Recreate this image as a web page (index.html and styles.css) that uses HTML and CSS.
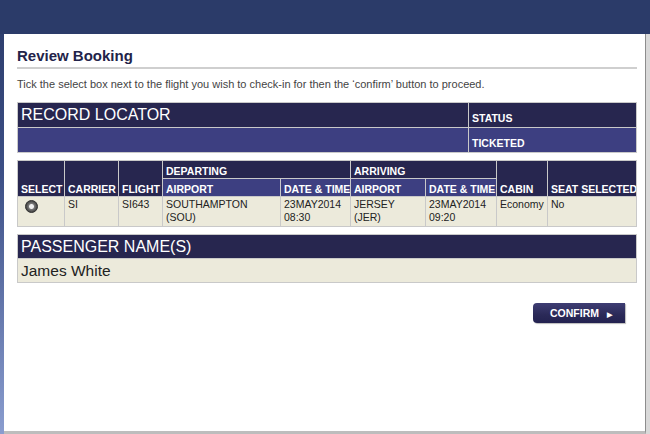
FILE: index.html
```html
<!DOCTYPE html>
<html lang="en">
<head>
    <meta charset="UTF-8">
    <title>Review Booking</title>
    <link rel="stylesheet" href="styles.css">
</head>
<body>
    <div class="topbar"></div>
    <div class="page">
        <div class="panel">
            <h1 class="title">Review Booking</h1>
            <p class="intro">Tick the select box next to the flight you wish to check-in for then the &lsquo;confirm&rsquo; button to proceed.</p>

            <table class="grid locator">
                <colgroup>
                    <col>
                    <col class="w-status">
                </colgroup>
                <tr class="dark">
                    <td class="big">RECORD LOCATOR</td>
                    <td class="status">STATUS</td>
                </tr>
                <tr class="blue">
                    <td></td>
                    <td class="status">TICKETED</td>
                </tr>
            </table>

            <table class="grid flights">
                <colgroup>
                    <col class="w-select">
                    <col class="w-carrier">
                    <col class="w-flight">
                    <col class="w-dep">
                    <col class="w-dtime">
                    <col class="w-arr">
                    <col class="w-atime">
                    <col class="w-cabin">
                    <col>
                </colgroup>
                <tr class="dark head">
                    <th rowspan="2">SELECT</th>
                    <th rowspan="2">CARRIER</th>
                    <th rowspan="2">FLIGHT</th>
                    <th colspan="2">DEPARTING</th>
                    <th colspan="2">ARRIVING</th>
                    <th rowspan="2">CABIN</th>
                    <th rowspan="2">SEAT SELECTED</th>
                </tr>
                <tr class="blue head">
                    <th>AIRPORT</th>
                    <th>DATE &amp; TIME</th>
                    <th>AIRPORT</th>
                    <th>DATE &amp; TIME</th>
                </tr>
                <tr class="row">
                    <td class="radio-cell"><span class="radio"></span></td>
                    <td>SI</td>
                    <td>SI643</td>
                    <td>SOUTHAMPTON<br>(SOU)</td>
                    <td>23MAY2014<br>08:30</td>
                    <td>JERSEY<br>(JER)</td>
                    <td>23MAY2014<br>09:20</td>
                    <td>Economy</td>
                    <td>No</td>
                </tr>
            </table>

            <table class="grid passengers">
                <tr class="dark">
                    <td class="big">PASSENGER NAME(S)</td>
                </tr>
                <tr class="row">
                    <td class="name">James White</td>
                </tr>
            </table>

            <div class="actions">
                <button class="btn">CONFIRM <span class="arrow">&#9654;</span></button>
            </div>
        </div>
    </div>
</body>
</html>
```

FILE: styles.css
```css
body{
    margin: 0;
    padding: 0;
    height: 434px;
    overflow: hidden;
    background: linear-gradient(to bottom, #2b3b69 0%, #3c4f86 40%, #8a9dcf 100%);
    font-family: "Liberation Sans", Arial, sans-serif;
}
.topbar{
    height: 34px;
    background: #2b3b69;
}
.page{
    height: 400px;
    padding-left: 4px;
}
.panel{
    box-sizing: border-box;
    height: 400px;
    background: #fff;
    border-right: 1px solid #8d8d8d;
    border-bottom: 3px solid #bdbdbd;
    box-shadow: 4px 0 0 #d9d9d9;
    margin-right: 4px;
    padding: 13px 8px 0 13px;
}
.title{
    margin: 0;
    padding: 0 0 2px;
    font-size: 15px;
    line-height: 18px;
    color: #232349;
    border-bottom: 2px solid #cfcfcf;
}
.intro{
    margin: 8px 0 0;
    font-size: 11px;
    line-height: 14px;
    color: #444;
}
.grid{
    width: 620px;
    table-layout: fixed;
    border-collapse: collapse;
    border: 1px solid #c9c9c9;
}
.grid td,
.grid th{
    border: 1px solid #c9c9c9;
    padding: 0 3px;
    text-align: left;
    font-size: 10.5px;
    font-weight: normal;
    color: #222;
    white-space: nowrap;
    overflow: hidden;
}
.dark td,
.dark th{
    background: #27264f;
    color: #fff;
    font-weight: bold;
}
.blue td,
.blue th{
    background: #3d3f81;
    color: #fff;
    font-weight: bold;
}
.row td{
    background: #eceadb;
}
.locator{
    margin-top: 11px;
}
.locator tr{
    height: 25px;
}
.w-status{ width: 168px; }
.locator .status{
    vertical-align: bottom;
    padding-bottom: 3px;
}
.big{
    font-size: 16px !important;
    font-weight: normal !important;
    vertical-align: top;
    padding-top: 3px !important;
}
.flights{
    margin-top: 7px;
}
.w-select{ width: 47px; }
.w-carrier{ width: 54px; }
.w-flight{ width: 44px; }
.w-dep{ width: 118px; }
.w-dtime{ width: 70px; }
.w-arr{ width: 75px; }
.w-atime{ width: 71px; }
.w-cabin{ width: 51px; }
.flights .head th{
    height: 16px;
    vertical-align: bottom;
    padding-bottom: 1px;
}
.flights .row td{
    height: 28px;
    vertical-align: top;
    padding-top: 1px;
    line-height: 13px;
}
.radio-cell{
    text-align: left;
}
.radio{
    display: inline-block;
    width: 11px;
    height: 11px;
    margin: 2px 0 0 4px;
    border-radius: 50%;
    background: radial-gradient(circle, #eee 0 2px, #777 3px, #3a3a3a 6px);
    border: 1px solid #333;
}
.passengers{
    margin-top: 7px;
}
.passengers tr{
    height: 24px;
}
.name{
    font-size: 15.5px !important;
    vertical-align: middle;
}
.actions{
    display: flex;
    justify-content: flex-end;
    margin-top: 20px;
    padding-right: 12px;
}
.btn{
    width: 92px;
    height: 20px;
    border: none;
    border-radius: 4px 0 0 4px;
    background: linear-gradient(to bottom, #3e3d73 0%, #2a2957 60%, #232250 100%);
    color: #fff;
    font-family: "Liberation Sans", Arial, sans-serif;
    font-size: 10.5px;
    font-weight: bold;
    padding: 0 0 0 4px;
    box-shadow: 1px 1px 1px #bbb;
}
.arrow{
    font-size: 7px;
    margin-left: 5px;
}
```
